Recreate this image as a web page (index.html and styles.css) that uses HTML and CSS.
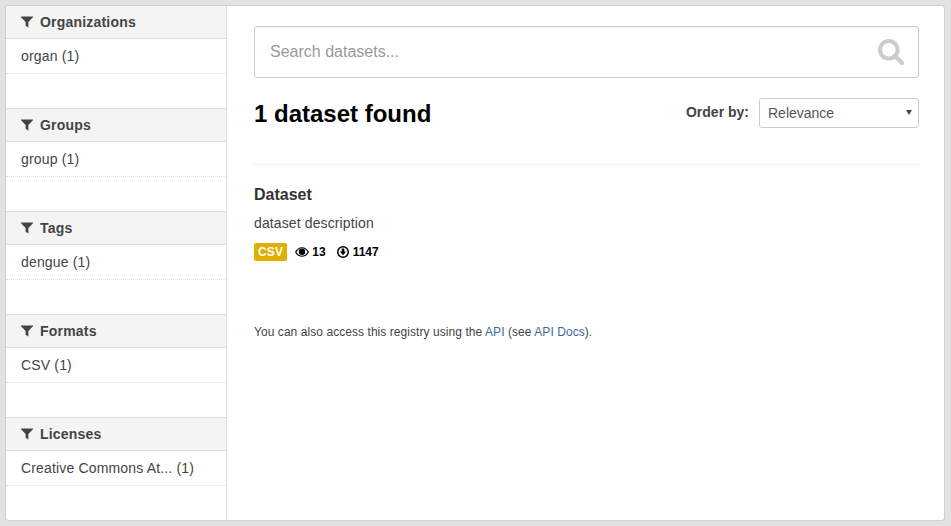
FILE: index.html
```html
<!DOCTYPE html>
<html lang="en">
<head>
<meta charset="utf-8">
<title>Datasets</title>
<link rel="stylesheet" href="styles.css">
</head>
<body>
<svg class="defs" width="0" height="0" aria-hidden="true">
  <symbol id="funnel" viewBox="0 0 12 12"><path d="M0 .5h12v.8L7.4 6v5.6L4.6 9.8V6L0 1.3z"/></symbol>
</svg>
<div class="wrapper">
  <aside class="sidebar">
    <section class="facet">
      <h2 class="facet-title"><svg class="funnel"><use href="#funnel"/></svg>Organizations</h2>
      <ul class="facet-list"><li class="facet-item">organ (1)</li></ul>
    </section>
    <section class="facet">
      <h2 class="facet-title"><svg class="funnel"><use href="#funnel"/></svg>Groups</h2>
      <ul class="facet-list"><li class="facet-item">group (1)</li></ul>
    </section>
    <section class="facet">
      <h2 class="facet-title"><svg class="funnel"><use href="#funnel"/></svg>Tags</h2>
      <ul class="facet-list"><li class="facet-item">dengue (1)</li></ul>
    </section>
    <section class="facet">
      <h2 class="facet-title"><svg class="funnel"><use href="#funnel"/></svg>Formats</h2>
      <ul class="facet-list"><li class="facet-item">CSV (1)</li></ul>
    </section>
    <section class="facet">
      <h2 class="facet-title"><svg class="funnel"><use href="#funnel"/></svg>Licenses</h2>
      <ul class="facet-list"><li class="facet-item">Creative Commons At... (1)</li></ul>
    </section>
  </aside>
  <main class="content">
    <div class="search">
      <span class="search-placeholder">Search datasets...</span>
      <svg class="search-icon" viewBox="0 0 26 26" aria-hidden="true">
        <circle cx="10.8" cy="10.8" r="8.8" fill="none" stroke="#ccc" stroke-width="4"/>
        <path d="M17 17l7 7" stroke="#ccc" stroke-width="4.4" stroke-linecap="round"/>
      </svg>
    </div>
    <div class="results-head">
      <h1 class="results-title">1 dataset found</h1>
      <div class="order">
        <span class="order-label">Order by:</span>
        <div class="select">Relevance<span class="caret"></span></div>
      </div>
    </div>
    <article class="dataset">
      <h3 class="dataset-title">Dataset</h3>
      <p class="dataset-desc">dataset description</p>
      <div class="dataset-meta">
        <span class="badge">CSV</span>
        <span class="stat">
          <svg class="eye" viewBox="0 0 14 10" aria-hidden="true">
            <path fill-rule="evenodd" d="M7 .2C3.900.2 1.300 2.300 0 5c1.300 2.700 3.900 4.800 7 4.800s5.700-2.100 7-4.800C12.700 2.300 10.100.2 7 .2zM7 1.300c2.300 0 4.300 1.400 5.600 3.700-1.300 2.300-3.300 3.700-5.600 3.700S2.700 7.300 1.400 5C2.700 2.700 4.700 1.300 7 1.300z"/>
            <circle cx="7" cy="4.800" r="3.200"/>
          </svg>13
        </span>
        <span class="stat">
          <svg class="down" viewBox="0 0 12 12" aria-hidden="true">
            <path fill-rule="evenodd" d="M6 0a6 6 0 1 0 0 12A6 6 0 0 0 6 0zm0 1.500a4.500 4.500 0 1 1 0 9 4.500 4.500 0 0 1 0-9z"/>
            <path d="M4.700 2.600h2.600v3h1.800L6 9.200 2.900 5.600h1.800z"/>
          </svg>1147
        </span>
      </div>
    </article>
    <p class="api-note">You can also access this registry using the <a class="link" href="#">API</a> (see <a class="link" href="#">API Docs</a>).</p>
  </main>
</div>
</body>
</html>
```

FILE: styles.css
```css
* { box-sizing: border-box; }
html, body { height: 100%; }
body {
  margin: 0;
  padding: 6px 7px 6px 6px;
  background: repeating-conic-gradient(#e5e5e5 0 25%, #dfdfdf 0 50%) 0 0 / 2px 2px;
  font-family: "Liberation Sans", Arial, sans-serif;
  color: #444;
  overflow: hidden;
}
.defs { position: absolute; }
.wrapper {
  display: flex;
  height: 514px;
  background: #fff;
  border-radius: 3px;
  box-shadow: 0 0 0 1px #d0d0d0;
  overflow: hidden;
}
.sidebar {
  flex: none;
  width: 221px;
  border-right: 1px solid #ddd;
}
.facet { height: 103px; }
.facet:first-child { height: 102px; }
.facet-title {
  display: flex;
  align-items: center;
  height: 33px;
  margin: 0;
  padding-left: 15px;
  background: #f4f4f4;
  border-bottom: 1px solid #ddd;
  font-size: 14px;
  font-weight: bold;
  letter-spacing: .2px;
  color: #444;
}
.facet + .facet .facet-title { height: 34px; border-top: 1px solid #ddd; }
.funnel { width: 12px; height: 12px; margin-right: 7px; fill: #444; }
.facet-list { margin: 0; padding: 0; list-style: none; }
.facet-item {
  height: 35px;
  padding: 8px 0 0 15px;
  border-bottom: 1px dotted #ddd;
  font-size: 14px;
  line-height: 19px;
  letter-spacing: .16px;
  color: #444;
}
.content {
  flex: 1;
  padding: 20px 25px 0 27px;
}
.search {
  display: flex;
  align-items: center;
  justify-content: space-between;
  height: 52px;
  padding: 0 14px 0 15px;
  border: 1px solid #ccc;
  border-radius: 3px;
  box-shadow: inset 0 1px 1px rgba(0,0,0,.05);
}
.search-placeholder { font-size: 16px; color: #999; }
.search-icon { width: 26px; height: 26px; }
.results-head {
  display: flex;
  align-items: flex-start;
  justify-content: space-between;
  height: 87px;
  padding-top: 20px;
  border-bottom: 1px dotted #ddd;
}
.results-title {
  margin: 0;
  font-size: 24px;
  line-height: 32px;
  font-weight: bold;
  color: #000;
}
.order { display: flex; align-items: center; gap: 10px; }
.order-label { margin-bottom: 2px; font-size: 14px; font-weight: bold; color: #444; }
.select {
  position: relative;
  width: 160px;
  height: 30px;
  padding-left: 8px;
  border: 1px solid #ccc;
  border-radius: 3px;
  font-size: 14px;
  line-height: 28px;
  color: #555;
}
.caret {
  position: absolute;
  right: 6px;
  top: 11px;
  border-style: solid;
  border-width: 5px 3px 0;
  border-color: #444 transparent transparent;
}
.dataset { padding-top: 20px; }
.dataset-title { margin: 0; font-size: 16px; line-height: 20px; font-weight: bold; color: #333; }
.dataset-desc { margin: 8px 0 0; font-size: 14px; line-height: 20px; letter-spacing: .12px; color: #444; }
.dataset-meta { display: flex; align-items: center; margin-top: 10px; font-size: 12px; font-weight: bold; color: #000; }
.badge {
  height: 18px;
  padding: 0 4px;
  margin-right: 8px;
  background: #e0b000;
  border-radius: 2px;
  color: #fff;
  font-size: 12px;
  line-height: 18px;
  letter-spacing: .2px;
}
.stat { display: flex; align-items: center; margin-right: 11.500px; }
.eye { width: 14px; height: 10px; margin-right: 3px; }
.down { width: 12px; height: 12px; margin-right: 3.500px; }
.api-note { margin: 63px 0 0; font-size: 12px; line-height: 17px; letter-spacing: .06px; color: #444; }
.link { color: #3a6a96; text-decoration: none; }
```
